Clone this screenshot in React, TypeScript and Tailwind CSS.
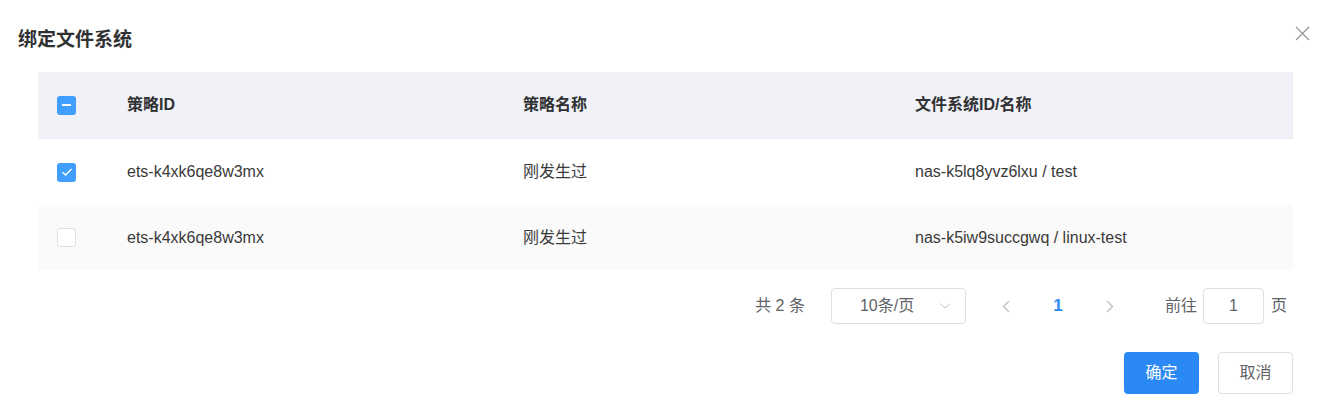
import React from 'react';

const rows = [
  { id: 'ets-k4xk6qe8w3mx', name: '刚发生过', fs: 'nas-k5lq8yvz6lxu / test', checked: true },
  { id: 'ets-k4xk6qe8w3mx', name: '刚发生过', fs: 'nas-k5iw9succgwq / linux-test', checked: false },
];

const font = { fontFamily: '"Liberation Sans", Arial, "Noto Sans CJK SC", sans-serif' };

const Checkbox: React.FC<{ state: 'on' | 'off' | 'half' }> = ({ state }) => {
  if (state === 'off') {
    return <span className="block w-[19px] h-[19px] rounded-[3px] border border-[#dcdfe6] bg-white" />;
  }
  return (
    <span className="flex items-center justify-center w-[19px] h-[19px] rounded-[3px] bg-[#409eff]">
      {state === 'half' ? (
        <span className="block w-[9px] h-[2px] bg-white" />
      ) : (
        <svg width="12" height="10" viewBox="0 0 12 10" fill="none">
          <path d="M1.5 5.2 L4.6 8 L10.5 2" stroke="white" strokeWidth="1.4" />
        </svg>
      )}
    </span>
  );
};

export default function App() {
  return (
    <div className="relative w-full h-[413px] bg-white text-[#333]" style={font}>
      <div className="pt-[28px] pl-[18px] text-[19px] leading-[24px] font-bold text-[#303133]">绑定文件系统</div>
      <button className="absolute top-[26px] right-[26px] text-[#909399]">
        <svg width="15" height="15" viewBox="0 0 15 15" fill="none">
          <path d="M1 1 L14 14 M14 1 L1 14" stroke="#909399" strokeWidth="1.2" />
        </svg>
      </button>

      <div className="ml-[38px] mr-[43px] mt-[20px] text-[16px]">
        <div className="flex items-center h-[67px] bg-[#f0f2f7] border-b border-[#e8eaf0] font-bold text-[#303133]">
          <div className="w-[89px] pl-[19px]"><Checkbox state="half" /></div>
          <div className="w-[396px]">策略ID</div>
          <div className="w-[392px]">策略名称</div>
          <div className="flex-1">文件系统ID/名称</div>
        </div>
        {rows.map((r, i) => (
          <div key={i} className={`flex items-center ${i === 0 ? 'h-[66px] bg-white' : 'h-[65px] bg-[#fafafa]'} text-[#3a3a3a]`}>
            <div className="w-[89px] pl-[19px]"><Checkbox state={r.checked ? 'on' : 'off'} /></div>
            <div className="w-[396px]">{r.id}</div>
            <div className="w-[392px]">{r.name}</div>
            <div className="flex-1">{r.fs}</div>
          </div>
        ))}
      </div>

      <div className="flex justify-end items-center mt-[18px] pr-[49px] text-[16px] text-[#606266]">
        <span className="mr-[26px]">共 2 条</span>
        <div className="flex items-center justify-between w-[135px] h-[36px] border border-[#dcdfe6] rounded-[4px] pl-[28px] pr-[14px]">
          <span>10条/页</span>
          <svg width="12" height="8" viewBox="0 0 12 8" fill="none">
            <path d="M1 1.5 L6 6 L11 1.5" stroke="#c0c4cc" strokeWidth="1" />
          </svg>
        </div>
        <div className="flex items-center ml-[14px]">
          <span className="flex items-center justify-center w-[52px] h-[36px]">
            <svg width="8" height="13" viewBox="0 0 8 13" fill="none">
              <path d="M7 1 L1.5 6.5 L7 12" stroke="#c0c4cc" strokeWidth="1.5" />
            </svg>
          </span>
          <span className="flex items-center justify-center w-[52px] h-[36px] font-bold text-[#2d8cf0] text-[17px]">1</span>
          <span className="flex items-center justify-center w-[52px] h-[36px]">
            <svg width="8" height="13" viewBox="0 0 8 13" fill="none">
              <path d="M1 1 L6.5 6.5 L1 12" stroke="#c0c4cc" strokeWidth="1.5" />
            </svg>
          </span>
        </div>
        <span className="ml-[29px]">前往</span>
        <div className="flex items-center justify-center w-[61px] h-[36px] ml-[6px] mr-[7px] border border-[#dcdfe6] rounded-[4px]">1</div>
        <span>页</span>
      </div>

      <div className="flex justify-end gap-[19px] mt-[28px] pr-[43px] text-[16px]">
        <button className="w-[75px] h-[42px] rounded-[4px] bg-[#2b89f5] text-white">确定</button>
        <button className="w-[75px] h-[42px] rounded-[4px] border border-[#dcdfe6] bg-white text-[#606266]">取消</button>
      </div>
    </div>
  );
}
